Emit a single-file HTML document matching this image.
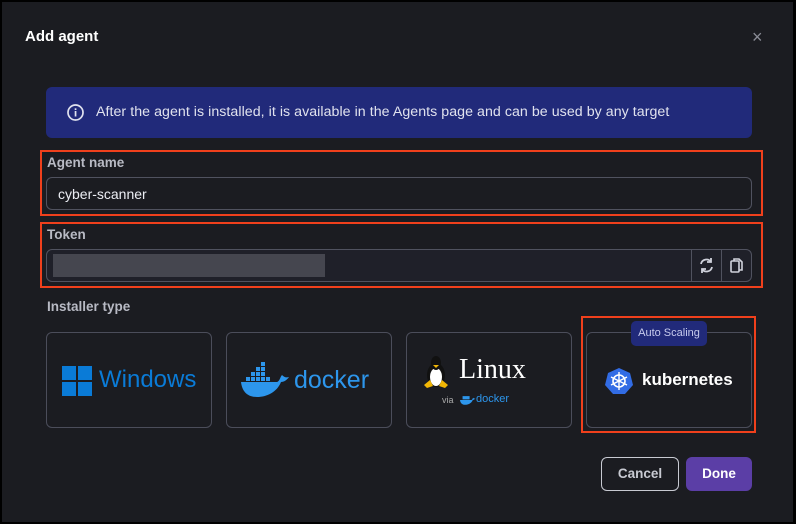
<!DOCTYPE html>
<html><head><style>
*{box-sizing:border-box;margin:0;padding:0}
body{width:796px;height:524px;background:#000;font-family:"Liberation Sans",sans-serif;position:relative;overflow:hidden}
.d{position:absolute;left:2px;top:2px;width:791px;height:520px;background:#1b1c21}
.a{position:absolute}
.red{position:absolute;border:2px solid #f0401c}
.inp{position:absolute;border:1px solid #50525f;border-radius:6px;background:#1b1c21}
.lbl{position:absolute;color:#b8bac4;font-weight:bold;font-size:13.5px}
.card{position:absolute;top:332px;width:166px;height:96px;border:1px solid #4b4d5a;border-radius:6px}
</style></head><body>
<div class="d"></div>
<div class="a" style="left:25px;top:28px;color:#fff;font-weight:bold;font-size:15px">Add agent</div>
<div class="a" style="left:752px;top:28px;color:#8a8c96;font-size:18px;line-height:18px">×</div>
<div class="a" style="left:46px;top:87px;width:706px;height:51px;background:#212a7a;border-radius:6px"></div>
<svg class="a" style="left:66px;top:103px" width="19" height="19" viewBox="0 0 19 19"><circle cx="9.5" cy="9.5" r="7.5" fill="none" stroke="#e0e2ee" stroke-width="1.7"/><rect x="8.7" y="8" width="1.7" height="5.5" fill="#e0e2ee"/><rect x="8.7" y="5.3" width="1.7" height="1.7" fill="#e0e2ee"/></svg>
<div class="a" style="left:96px;top:104px;color:#e0e2ee;font-size:14.2px;letter-spacing:0.05px">After the agent is installed, it is available in the Agents page and can be used by any target</div>
<div class="red" style="left:40px;top:150px;width:723px;height:66px"></div>
<div class="lbl" style="left:47px;top:155px">Agent name</div>
<div class="inp" style="left:46px;top:177px;width:706px;height:33px"></div>
<div class="a" style="left:58px;top:186px;color:#eceef4;font-size:14px">cyber-scanner</div>
<div class="red" style="left:40px;top:222px;width:723px;height:66px"></div>
<div class="lbl" style="left:47px;top:227px">Token</div>
<div class="inp" style="left:46px;top:249px;width:706px;height:33px;background:#1f2029"></div>
<div class="a" style="left:691px;top:250px;width:1px;height:31px;background:#50525f"></div>
<div class="a" style="left:721px;top:250px;width:1px;height:31px;background:#50525f"></div>
<div class="a" style="left:53px;top:254px;width:272px;height:23px;background:#45464f"></div>
<svg class="a" style="left:698px;top:257px" width="17" height="17" viewBox="0 0 17 17" fill="none" stroke="#d0d2dc" stroke-width="1.8"><path d="M3 7a5.5 5.5 0 0 1 10-2M14 10a5.5 5.5 0 0 1-10 2"/><path d="M13 1v4h-4M4 16v-4h4"/></svg>
<svg class="a" style="left:729px;top:257px" width="15" height="17" viewBox="0 0 15 17" fill="none" stroke="#d0d2dc" stroke-width="1.6"><rect x="2" y="4" width="8" height="11" rx="1"/><path d="M5 4V2h5l3 3v8h-3"/></svg>
<div class="lbl" style="left:47px;top:299px">Installer type</div>
<div class="card" style="left:46px"></div>
<svg class="a" style="left:62px;top:366px" width="30" height="30"><rect width="14" height="14" fill="#0a7bd7"/><rect x="16" width="14" height="14" fill="#0a7bd7"/><rect y="16" width="14" height="14" fill="#0a7bd7"/><rect x="16" y="16" width="14" height="14" fill="#0a7bd7"/></svg>
<div class="a" style="left:99px;top:366px;color:#0a7bd7;font-size:24px">Windows</div>
<div class="card" style="left:226px"></div>
<svg class="a" style="left:241px;top:362px" width="50" height="36" viewBox="0 0 50 36"><g fill="#2d96ec"><rect x="10" y="10" width="4" height="4"/><rect x="15" y="10" width="4" height="4"/><rect x="20" y="10" width="4" height="4"/><rect x="15" y="5" width="4" height="4"/><rect x="20" y="5" width="4" height="4"/><rect x="20" y="0" width="4" height="4"/><rect x="5" y="15" width="4" height="4"/><rect x="10" y="15" width="4" height="4"/><rect x="15" y="15" width="4" height="4"/><rect x="20" y="15" width="4" height="4"/><rect x="25" y="15" width="4" height="4"/><path d="M0 20h36c3-1 3-5 5-7 2 2 4 3 7 2-2 3-5 5-8 5-4 10-14 15-24 15C6 35 1 29 0 20z"/></g></svg>
<div class="a" style="left:294px;top:366px;color:#2d96ec;font-size:25px">docker</div>
<div class="card" style="left:406px"></div>
<svg class="a" style="left:422px;top:355px" width="28" height="34" viewBox="0 0 28 34"><ellipse cx="14" cy="20" rx="9" ry="12" fill="#111"/><ellipse cx="14" cy="22" rx="6" ry="9" fill="#fff"/><ellipse cx="14" cy="8" rx="5" ry="7" fill="#111"/><path d="M11 10h6l-3 3z" fill="#f2b705"/><path d="M2 30l6-5 3 6-6 2zM26 30l-6-5-3 6 6 2z" fill="#f2b705"/></svg>
<div class="a" style="left:459px;top:354px;color:#fff;font-family:'Liberation Serif',serif;font-size:28px">Linux</div>
<div class="a" style="left:442px;top:395px;color:#aaa;font-size:9px">via</div>
<svg class="a" style="left:460px;top:394px" width="16" height="12" viewBox="0 0 50 36"><path fill="#2d96ec" d="M0 18h36c3-1 3-5 5-7 2 2 4 3 7 2-2 3-5 5-8 5-4 10-14 15-24 15C6 33 1 27 0 18zM8 6h22v10H8z"/></svg>
<div class="a" style="left:476px;top:393px;color:#2d96ec;font-size:11px">docker</div>
<div class="red" style="left:581px;top:316px;width:175px;height:117px"></div>
<div class="card" style="left:586px"></div>
<div class="a" style="left:631px;top:321px;width:76px;height:25px;background:#212a7a;border-radius:5px;color:#c8ccee;font-size:11px;text-align:center;line-height:25px">Auto Scaling</div>
<svg class="a" style="left:605px;top:367px" width="28" height="27" viewBox="0 0 28 27"><path d="M14 1l11 5 3 12-8 9H8l-8-9 3-12z" fill="#326ce5"/><circle cx="14" cy="14" r="6" fill="none" stroke="#fff" stroke-width="1.6"/><path d="M14 5v18M6 10l16 8M22 10L6 18" stroke="#fff" stroke-width="1.4"/></svg>
<div class="a" style="left:642px;top:370px;color:#fff;font-weight:bold;font-size:17px">kubernetes</div>
<div class="a" style="left:601px;top:457px;width:78px;height:34px;border:1px solid #c8cad2;border-radius:6px;color:#c8cad2;font-weight:bold;font-size:13.5px;text-align:center;line-height:32px">Cancel</div>
<div class="a" style="left:686px;top:457px;width:66px;height:34px;background:#5b3ea6;border-radius:6px;color:#fff;font-weight:bold;font-size:13.5px;text-align:center;line-height:34px">Done</div>
</body></html>
